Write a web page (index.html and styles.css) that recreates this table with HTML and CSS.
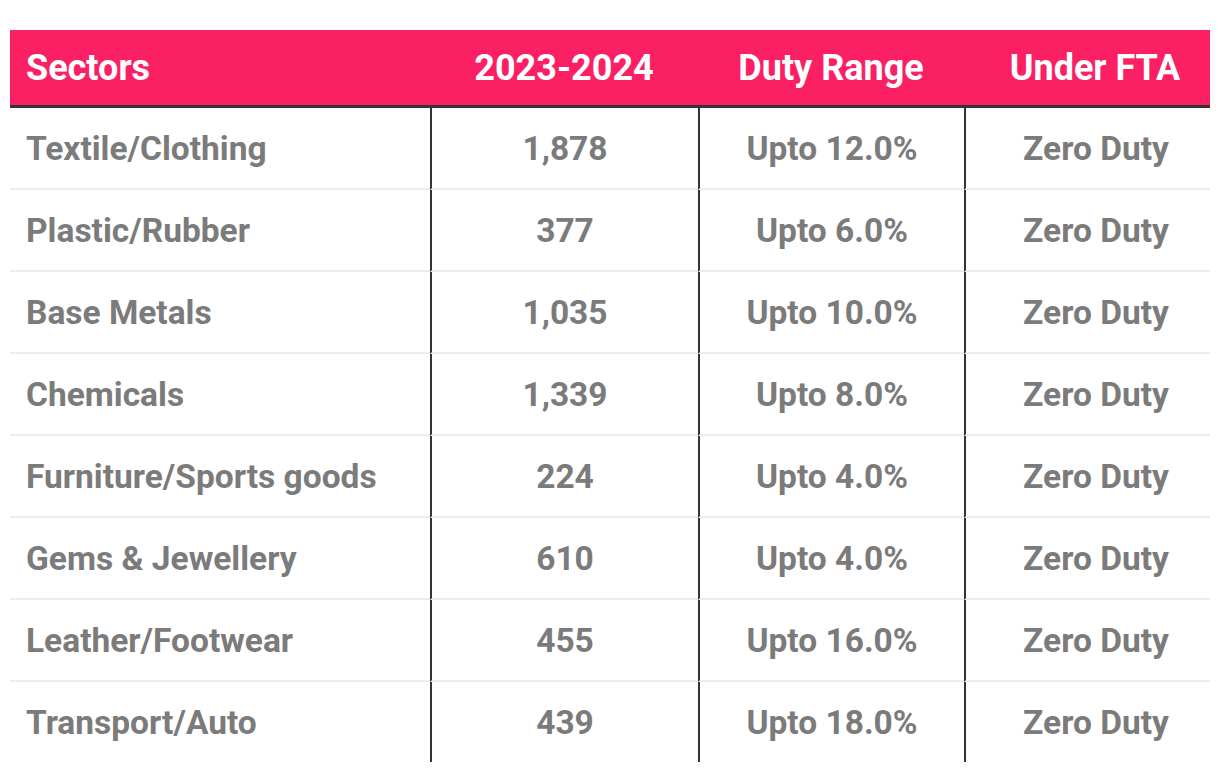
FILE: index.html
```html
<!DOCTYPE html>
<html>
<head>
<meta charset="utf-8">
<link rel="stylesheet" href="styles.css">
</head>
<body>
<table class="duty-table">
  <colgroup>
    <col class="c1"><col class="c2"><col class="c3"><col class="c4">
  </colgroup>
  <thead>
    <tr>
      <th class="left">Sectors</th>
      <th>2023-2024</th>
      <th>Duty Range</th>
      <th class="last">Under FTA</th>
    </tr>
  </thead>
  <tbody>
    <tr><td class="left">Textile/Clothing</td><td>1,878</td><td>Upto 12.0%</td><td class="last">Zero Duty</td></tr>
    <tr><td class="left">Plastic/Rubber</td><td>377</td><td>Upto 6.0%</td><td class="last">Zero Duty</td></tr>
    <tr><td class="left">Base Metals</td><td>1,035</td><td>Upto 10.0%</td><td class="last">Zero Duty</td></tr>
    <tr><td class="left">Chemicals</td><td>1,339</td><td>Upto 8.0%</td><td class="last">Zero Duty</td></tr>
    <tr><td class="left">Furniture/Sports goods</td><td>224</td><td>Upto 4.0%</td><td class="last">Zero Duty</td></tr>
    <tr><td class="left">Gems &amp; Jewellery</td><td>610</td><td>Upto 4.0%</td><td class="last">Zero Duty</td></tr>
    <tr><td class="left">Leather/Footwear</td><td>455</td><td>Upto 16.0%</td><td class="last">Zero Duty</td></tr>
    <tr><td class="left">Transport/Auto</td><td>439</td><td>Upto 18.0%</td><td class="last">Zero Duty</td></tr>
  </tbody>
</table>
</body>
</html>
```
FILE: styles.css
```css
html, body {
  margin: 0;
  padding: 0;
  background: #ffffff;
}
body {
  padding: 30px 10px 10px 10px;
  font-family: Roboto, "Liberation Sans", Arial, sans-serif;
}
.duty-table {
  width: 1200px;
  border-collapse: separate;
  border-spacing: 0;
  table-layout: fixed;
  font-weight: 700;
  font-size: 33.5px;
}
.c1 { width: 420px; }
.c2 { width: 268px; }
.c3 { width: 266px; }
.c4 { width: 246px; }
.duty-table th {
  background: #fb1f64;
  color: #ffffff;
  height: 75px;
  padding: 0;
  text-align: center;
  border-bottom: 3px solid #333333;
  font-weight: 700;
  font-size: 36px;
}
.duty-table td {
  height: 80px;
  padding: 0;
  text-align: center;
  color: #7b7b7b;
  border-bottom: 2px solid #ececec;
  border-left: 2px solid #333333;
}
.duty-table tbody tr:last-child td {
  border-bottom: none;
}
.duty-table th.left,
.duty-table td.left {
  text-align: left;
  padding-left: 16px;
  border-left: none;
}
.duty-table th.last,
.duty-table td.last {
  padding-left: 16px;
}
```
